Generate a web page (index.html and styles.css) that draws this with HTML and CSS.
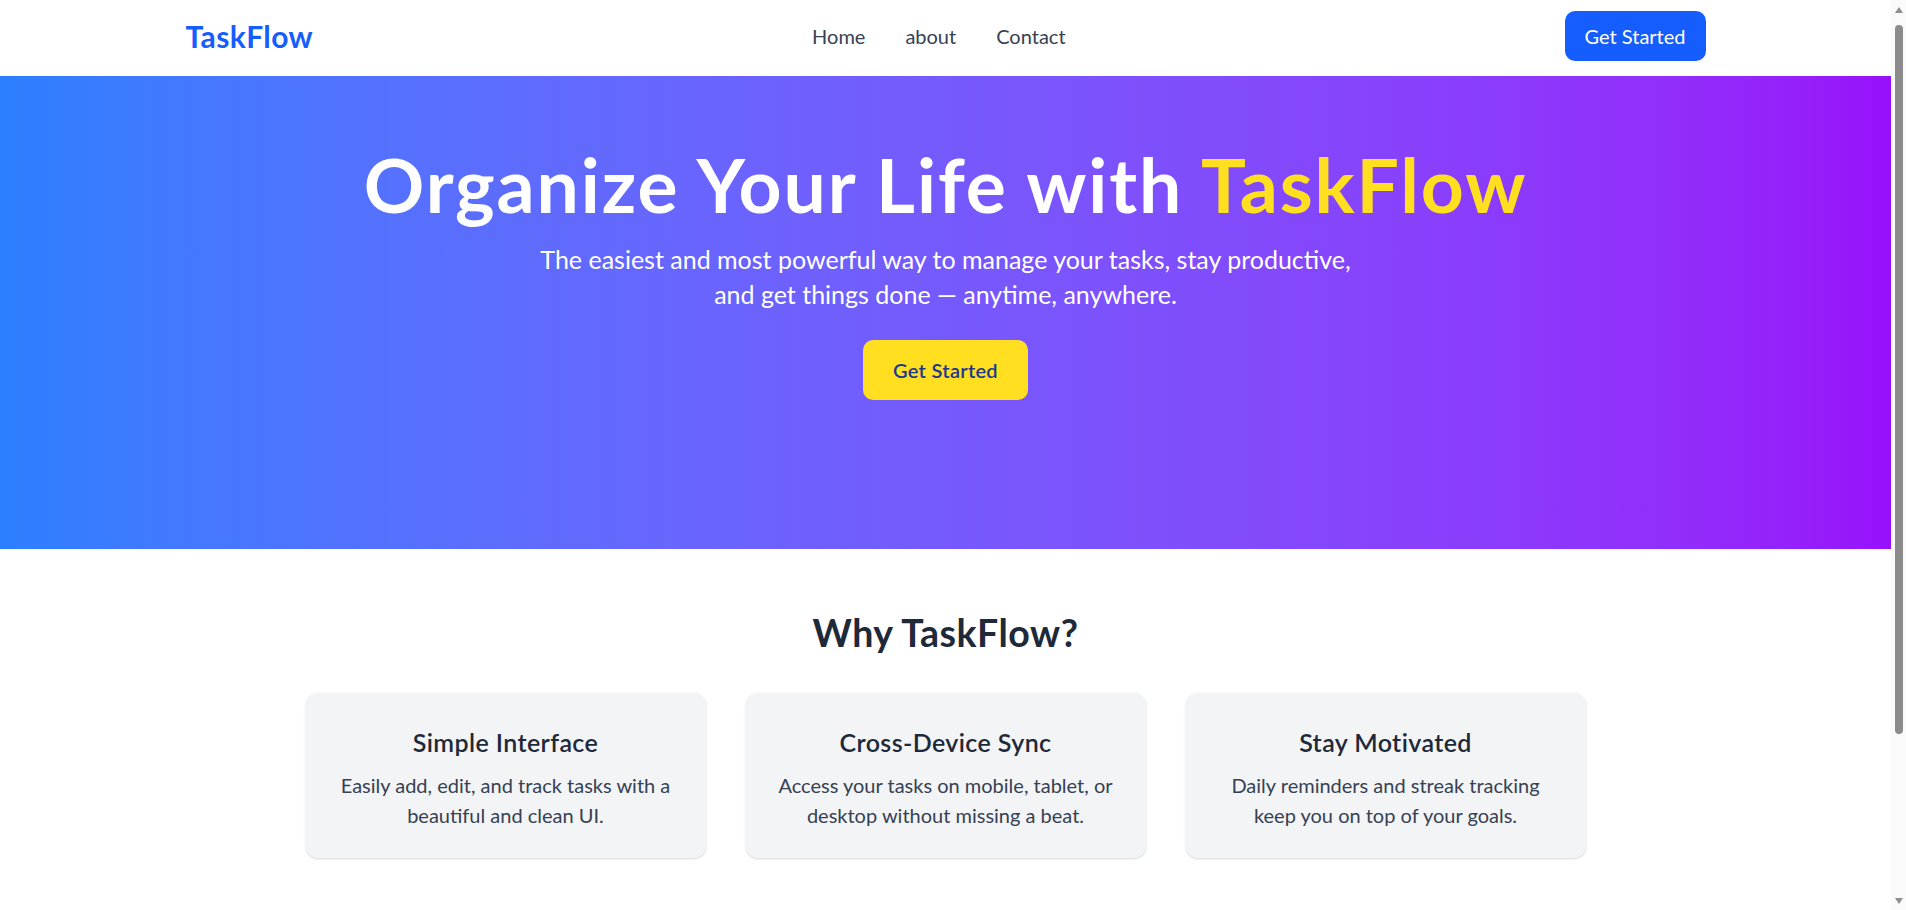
FILE: index.html
```html
<!DOCTYPE html>
<html lang="en">
<head>
<meta charset="utf-8">
<title>TaskFlow</title>
<link rel="stylesheet" href="styles.css">
</head>
<body>
<div class="page">
  <header class="nav">
    <div class="nav-inner">
      <a class="logo" href="#">TaskFlow</a>
      <nav class="links">
        <a href="#">Home</a>
        <a href="#">about</a>
        <a href="#">Contact</a>
      </nav>
      <a class="btn-primary" href="#">Get Started</a>
    </div>
  </header>
  <section class="hero">
    <h1 class="hero-title">Organize Your Life with <span class="accent">TaskFlow</span></h1>
    <p class="hero-sub">The easiest and most powerful way to manage your tasks, stay productive, and get things done — anytime, anywhere.</p>
    <a class="btn-yellow" href="#">Get Started</a>
  </section>
  <section class="features">
    <h2 class="features-title">Why TaskFlow?</h2>
    <div class="cards">
      <div class="card">
        <h3 class="card-title">Simple Interface</h3>
        <p class="card-text">Easily add, edit, and track tasks with a beautiful and clean UI.</p>
      </div>
      <div class="card">
        <h3 class="card-title">Cross-Device Sync</h3>
        <p class="card-text">Access your tasks on mobile, tablet, or desktop without missing a beat.</p>
      </div>
      <div class="card">
        <h3 class="card-title">Stay Motivated</h3>
        <p class="card-text">Daily reminders and streak tracking keep you on top of your goals.</p>
      </div>
    </div>
  </section>
</div>
<div class="scrollbar" aria-hidden="true">
  <span class="arrow-up"></span>
  <span class="thumb"></span>
  <span class="arrow-down"></span>
</div>
</body>
</html>
```
FILE: styles.css
```css
* { box-sizing: border-box; }
body {
  margin: 0;
  font-family: Lato, "Noto Sans", sans-serif;
  color: #1e2939;
  background: #fff;
  display: flex;
  align-items: flex-start;
}
a { text-decoration: none; }
h1, h2, h3, p { margin: 0; }

.page {
  flex: 1;
  min-width: 0;
}

/* scrollbar strip drawn at the right edge of the window */
.scrollbar {
  position: sticky;
  top: 0;
  width: 15px;
  height: 910px;
  flex-shrink: 0;
  background: #fafafa;
  display: flex;
  flex-direction: column;
  align-items: center;
  padding: 7px 0 6px;
}
.arrow-up, .arrow-down {
  width: 0;
  height: 0;
  border-left: 4.5px solid transparent;
  border-right: 4.5px solid transparent;
}
.arrow-up { border-bottom: 6px solid #8f8f8f; }
.arrow-down { border-top: 6px solid #8f8f8f; margin-top: auto; }
.thumb {
  width: 8px;
  height: 709px;
  margin-top: 12px;
  background: #8b8b8b;
  border-radius: 4px;
}

.nav {
  background: #fff;
  height: 76px;
  padding-bottom: 4px;
  display: flex;
  align-items: center;
  position: relative;
  z-index: 1;
}
.nav-inner {
  width: 100%;
  max-width: 1600px;
  margin: 0 auto;
  padding: 0 40px;
  display: flex;
  align-items: center;
  justify-content: space-between;
}
.logo {
  font-size: 30px;
  font-weight: 700;
  letter-spacing: 0.4px;
  color: #155dfc;
  line-height: 38px;
}
.links {
  display: flex;
  gap: 40px;
}
.links a {
  font-size: 20px;
  color: #364153;
  line-height: 30px;
}
.btn-primary {
  background: #155dfc;
  color: #fff;
  font-size: 20px;
  line-height: 30px;
  padding: 10px 20px;
  border-radius: 10px;
  font-weight: 400;
}

.hero {
  background: linear-gradient(to right in oklab, #2b7fff, #9810fa);
  padding: 71px 20px 149px;
  display: flex;
  flex-direction: column;
  align-items: center;
  text-align: center;
  color: #fff;
}
.hero-title {
  font-size: 75px;
  line-height: 75px;
  font-weight: 700;
  letter-spacing: 1.9px;
  margin-bottom: 20px;
}
.accent { color: #ffdf20; }
.hero-sub {
  font-size: 25px;
  line-height: 35px;
  max-width: 840px;
  margin-bottom: 28px;
}
.btn-yellow {
  background: #ffdf20;
  color: #1c398e;
  font-size: 20px;
  line-height: 30px;
  font-weight: 600;
  letter-spacing: 0.3px;
  padding: 15px 30px;
  border-radius: 10px;
}

.features {
  padding: 61px 20px 250px;
  display: flex;
  flex-direction: column;
  align-items: center;
}
.features-title {
  font-size: 37.5px;
  line-height: 45px;
  font-weight: 700;
  letter-spacing: 0.5px;
  margin-bottom: 38px;
}
.cards {
  width: 100%;
  max-width: 1280px;
  display: grid;
  grid-template-columns: repeat(3, 1fr);
  gap: 40px;
}
.card {
  background: #f3f4f6;
  border-radius: 12px;
  padding: 32px 30px 28px;
  text-align: center;
  box-shadow: 0 1px 3px rgba(0,0,0,0.1), 0 1px 2px rgba(0,0,0,0.06);
}
.card-title {
  font-size: 25px;
  line-height: 35px;
  font-weight: 600;
  letter-spacing: 0.4px;
  margin-bottom: 10px;
}
.card-text {
  font-size: 20px;
  line-height: 30px;
  color: #364153;
}
```
